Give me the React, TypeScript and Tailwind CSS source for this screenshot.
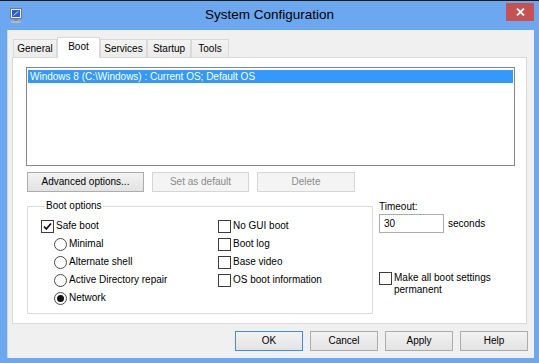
import React from 'react';

const tabs = ['General', 'Boot', 'Services', 'Startup', 'Tools'];
const tabWidths = ['w-[44px]', 'w-[43px]', 'w-[47px]', 'w-[44px]', 'w-[38px]'];

const CheckBox: React.FC<{ checked?: boolean }> = ({ checked }) => (
  <div className="w-[13px] h-[13px] border border-[#3c3c3c] bg-white flex items-center justify-center shrink-0">
    {checked && (
      <svg width="11" height="11" viewBox="0 0 11 11">
        <path d="M2 5.5 L4.3 8 L9 2.5" fill="none" stroke="#111" strokeWidth="1.8" />
      </svg>
    )}
  </div>
);

const Radio: React.FC<{ checked?: boolean }> = ({ checked }) => (
  <div className="w-[13px] h-[13px] rounded-full border border-[#4a4a4a] bg-white flex items-center justify-center shrink-0">
    {checked && <div className="w-[7px] h-[7px] rounded-full bg-[#111]"></div>}
  </div>
);

const Button: React.FC<{ label: string; width: string; disabled?: boolean; primary?: boolean }> = ({ label, width, disabled, primary }) => (
  <div
    className={
      disabled
        ? `${width} h-[20px] border border-[#d5d5d5] bg-[#f4f4f4] text-[#8a8a8a] flex items-center justify-center`
        : primary
        ? `${width} h-[20px] border border-[#3c8fe0] bg-linear-to-b from-[#f2f2f2] to-[#e3e3e3] text-black flex items-center justify-center`
        : `${width} h-[20px] border border-[#acacac] bg-linear-to-b from-[#f2f2f2] to-[#e3e3e3] text-black flex items-center justify-center`
    }
  >
    {label}
  </div>
);

const Row: React.FC<{ children: React.ReactNode; indent?: boolean }> = ({ children, indent }) => (
  <div className={`h-[18px] flex items-center gap-[2px] ${indent ? 'pl-[13px]' : ''}`}>{children}</div>
);

export default function App() {
  return (
    <div className="w-[539px] h-[363px] bg-[#6ca8ef] border-t border-[#1b1b1b] flex flex-col font-['Liberation_Sans',Arial,sans-serif] text-[10px] text-black leading-none">
      {/* title bar */}
      <div className="h-[29px] grid grid-cols-[1fr_auto_1fr]">
        <div className="pl-[9px] pt-[7px]">
          <svg width="14" height="16" viewBox="0 0 14 16">
            <rect x="1.5" y="0.5" width="11" height="10" fill="#eef1f8" stroke="#6b7898" />
            <rect x="3" y="2" width="8" height="7" fill="#2c5fd6" />
            <path d="M4.5 7.5 L9.5 3.2" stroke="#cfe0ff" strokeWidth="1" />
            <rect x="5" y="11" width="4" height="2" fill="#8c8c8c" />
            <rect x="2.5" y="13" width="9" height="2" fill="#b8b8b8" />
          </svg>
        </div>
        <div className="flex items-center text-[13.5px] text-black pb-[1px]">System Configuration</div>
        <div className="flex justify-end pr-[5px] pt-[2px]">
          <div className="w-[28px] h-[18px] bg-[#c75050] flex items-center justify-center">
            <svg width="9" height="8" viewBox="0 0 9 8">
              <path d="M1 0.5 L8 7.5 M8 0.5 L1 7.5" stroke="#fff" strokeWidth="1.8" />
            </svg>
          </div>
        </div>
      </div>

      {/* client */}
      <div className="ml-[7px] mr-[5px] h-[328px] bg-[#f0f0f0] border-l border-[#c9d6e6] flex flex-col pl-[4px] pt-[7px]">
        {/* tabs */}
        <div className="h-[20px] flex items-end pl-[1px]">
          {tabs.map((t, i) =>
            t === 'Boot' ? (
              <div key={t} className={`${tabWidths[i]} h-[21px] -mb-px relative z-10 bg-white border border-b-0 border-[#d9d9d9] flex items-center justify-center pb-[3px]`}>
                {t}
              </div>
            ) : (
              <div key={t} className={`${tabWidths[i]} h-[18px] bg-linear-to-b from-[#f3f3f3] to-[#ebebeb] border border-b-0 border-[#d9d9d9] flex items-center justify-center`}>
                {t}
              </div>
            )
          )}
        </div>

        {/* panel */}
        <div className="w-[515px] h-[267px] bg-white border border-[#d9d9d9] pl-[13px] pt-[9px]">
          <div className="w-[489px] h-[99px] border border-[#828790] bg-white pt-[2px] px-[1px]">
            <div className="h-[13px] bg-[#3399ff] text-white flex items-center pl-[2px]">
              Windows 8 (C:\Windows) : Current OS; Default OS
            </div>
          </div>

          <div className="flex gap-[8px] mt-[6px] ml-[1px]">
            <Button label="Advanced options..." width="w-[117px]" />
            <Button label="Set as default" width="w-[97px]" disabled />
            <Button label="Delete" width="w-[98px]" disabled />
          </div>

          <div className="flex mt-[8px] ml-[1px]">
            <fieldset className="w-[346px] h-[114px] border border-[#dcdcdc] pl-[13px] pt-[5px]">
              <legend className="ml-[4px] px-[1px] leading-[12px]">Boot options</legend>
              <div className="flex">
                <div className="w-[177px]">
                  <Row>
                    <CheckBox checked />
                    <span>Safe boot</span>
                  </Row>
                  <Row indent>
                    <Radio />
                    <span>Minimal</span>
                  </Row>
                  <Row indent>
                    <Radio />
                    <span>Alternate shell</span>
                  </Row>
                  <Row indent>
                    <Radio />
                    <span>Active Directory repair</span>
                  </Row>
                  <Row indent>
                    <Radio checked />
                    <span>Network</span>
                  </Row>
                </div>
                <div>
                  <Row>
                    <CheckBox />
                    <span>No GUI boot</span>
                  </Row>
                  <Row>
                    <CheckBox />
                    <span>Boot log</span>
                  </Row>
                  <Row>
                    <CheckBox />
                    <span>Base video</span>
                  </Row>
                  <Row>
                    <CheckBox />
                    <span>OS boot information</span>
                  </Row>
                </div>
              </div>
            </fieldset>

            <div className="ml-[6px] flex flex-col">
              <div className="h-[14px] flex items-center">Timeout:</div>
              <div className="flex items-center">
                <div className="w-[65px] h-[19px] border border-[#abadb3] bg-white flex items-center pl-[4px]">30</div>
                <span className="ml-[4px]">seconds</span>
              </div>
              <div className="flex items-start gap-[2px] mt-[39px]">
                <CheckBox />
                <span className="leading-[12px]">
                  Make all boot settings
                  <br />
                  permanent
                </span>
              </div>
            </div>
          </div>
        </div>

        {/* dialog buttons */}
        <div className="flex justify-end gap-[7px] mt-[7px] pr-[6px]">
          <Button label="OK" width="w-[68px]" primary />
          <Button label="Cancel" width="w-[68px]" />
          <Button label="Apply" width="w-[68px]" />
          <Button label="Help" width="w-[68px]" />
        </div>
      </div>
    </div>
  );
}
